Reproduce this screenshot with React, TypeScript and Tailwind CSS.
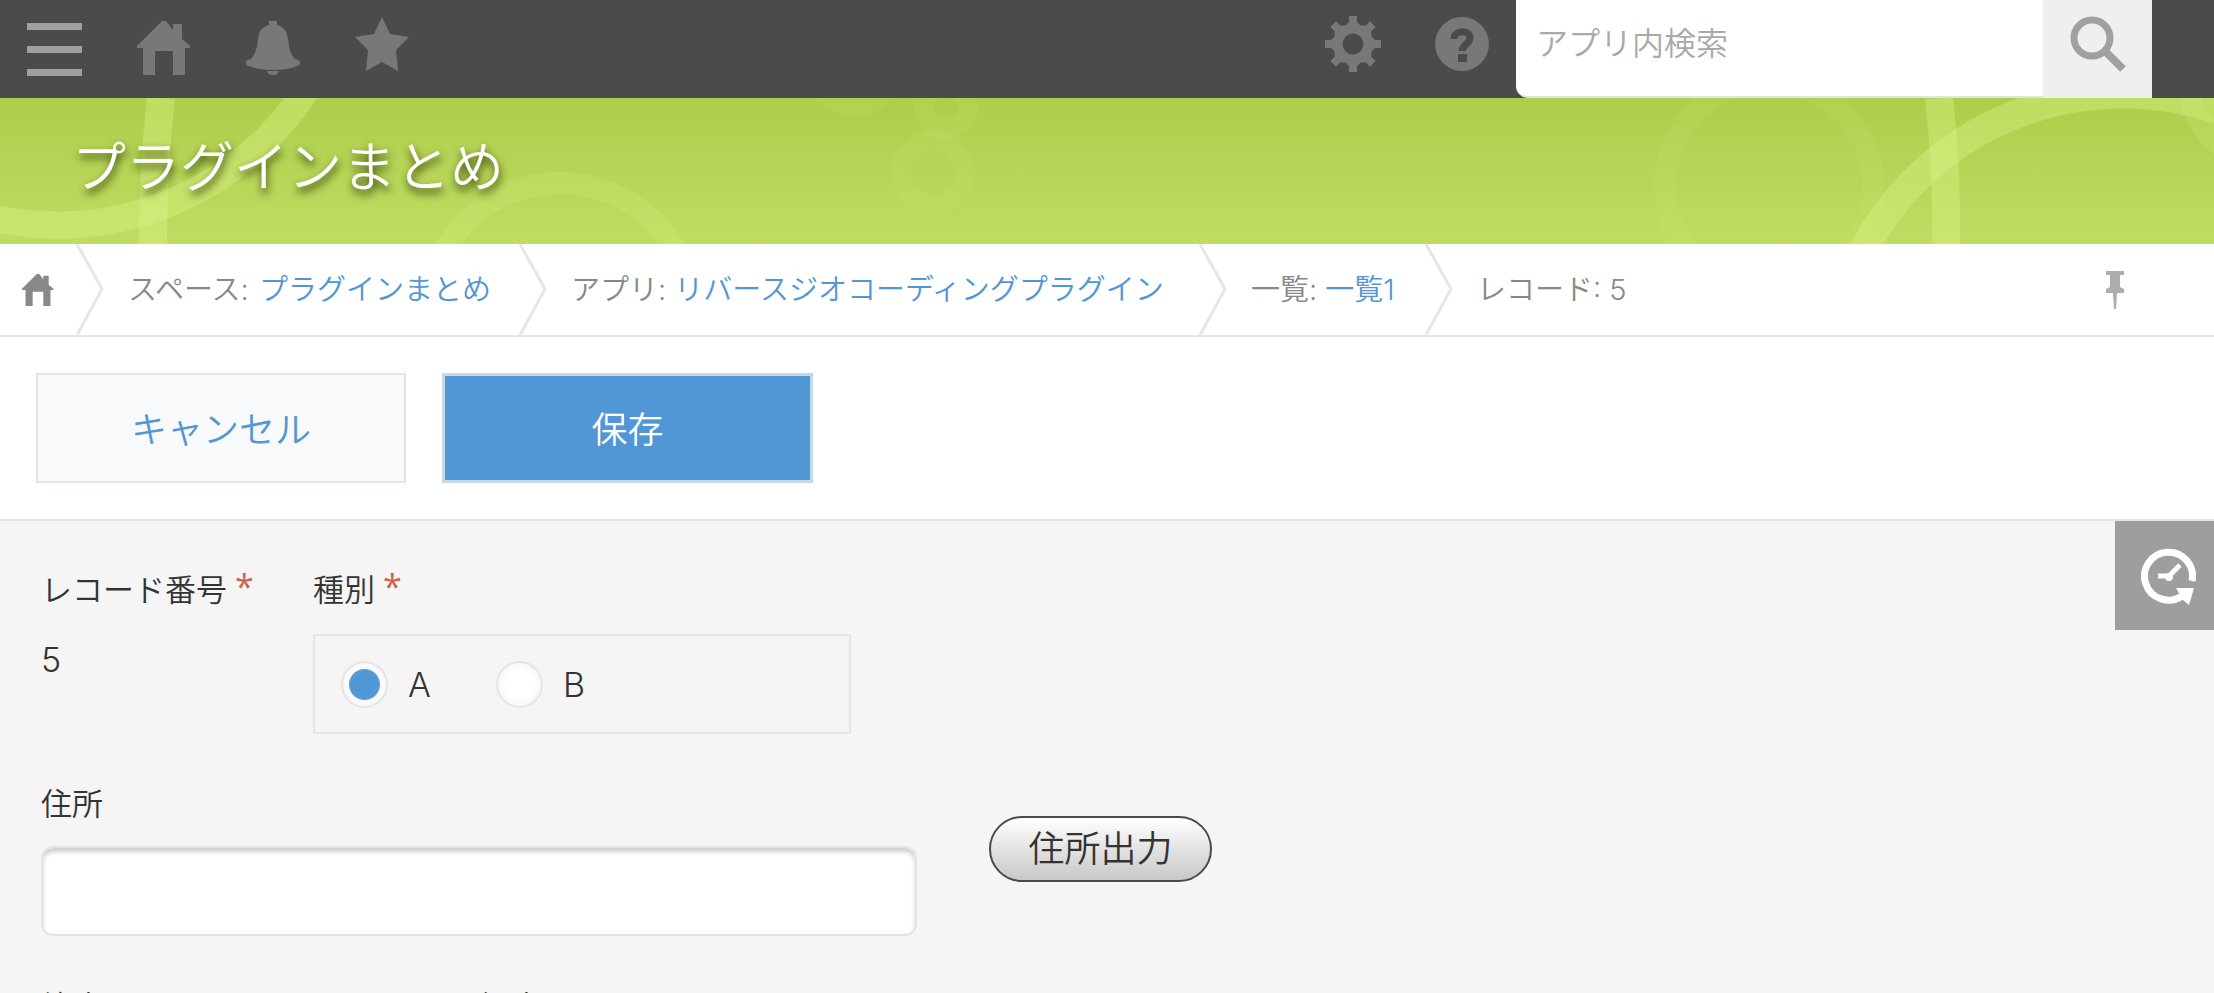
import React, { useState } from 'react'

const NAV_ICON = 'flex h-[98px] w-[109px] items-start justify-center text-[#787878]'
const TEXT_BOX = 'mt-[22px] block h-[90px] rounded-xl border-2 border-[#e3e5e5] bg-white px-4 text-[34px] shadow-[inset_0_4px_4px_#cccfcf] outline-none'

function HomeIcon({ className }: { className?: string }) {
  return (
    <svg viewBox="0 0 54 54" className={className} fill="currentColor" aria-hidden="true">
      <path d="M25 0h4l7 9V3h9v15l8 7v2h-5v27H36V30H18v24H6V27H0v-2z" />
    </svg>
  )
}

function BellIcon() {
  return (
    <svg viewBox="0 0 54 54" className="h-[54px] w-[54px]" fill="currentColor" aria-hidden="true">
      <path d="M23 0h8v4c7 2 10 6 11 14 1 10 3 16 7 20 2 1 5 1 5 3 0 3-1 4-3 4-7 3-15 4-24 4S10 48 3 45c-2 0-3-1-3-4 0-2 3-2 5-3 4-4 6-10 7-20 1-8 4-12 11-14zM21 50h12c-1 3-3 4-6 4s-5-1-6-4z" />
    </svg>
  )
}

function StarIcon() {
  return (
    <svg viewBox="0 0 54 54" className="h-[54px] w-[54px]" fill="currentColor" aria-hidden="true">
      <path d="M27 0l8 17 19 3-13 13 2 21-16-9-16 9 2-21L0 20l19-3z" />
    </svg>
  )
}

function GearIcon() {
  return (
    <svg viewBox="0 0 56 56" className="h-[56px] w-[56px]" aria-hidden="true">
      <g fill="currentColor">
        {[0, 45, 90, 135, 180, 225, 270, 315].map(a => (
          <path key={a} d="M24 0h8v6l5 5H19l5-5z" transform={`rotate(${a} 28 28)`} />
        ))}
      </g>
      <circle cx="28" cy="28" r="15" fill="none" stroke="currentColor" strokeWidth="9" />
    </svg>
  )
}

function HelpIcon() {
  return (
    <svg viewBox="0 0 54 54" className="h-[54px] w-[54px]" aria-hidden="true">
      <circle cx="27" cy="27" r="27" fill="currentColor" />
      <path d="M19 22c0-9 16-10 16-1 0 6-8 7-8 13" fill="none" stroke="#4b4b4b" strokeWidth="7" />
      <path d="M23 37h9v8h-9z" fill="#4b4b4b" />
    </svg>
  )
}

function SearchIcon() {
  return (
    <svg viewBox="0 0 56 56" className="h-[56px] w-[56px]" fill="none" stroke="#a0a0a0" aria-hidden="true">
      <circle cx="22" cy="22" r="18" strokeWidth="7" />
      <path d="M35 35l18 18" strokeWidth="8" />
    </svg>
  )
}

function PinIcon() {
  return (
    <svg viewBox="0 0 18 38" className="h-[38px] w-[18px]" fill="#adadad" aria-hidden="true">
      <path d="M0 0h18v4h-4v12l4 2v4h-7l-1 16H8L7 22H0v-4l4-2V4H0z" />
    </svg>
  )
}

function HistoryIcon() {
  return (
    <svg viewBox="0 0 56 58" className="h-[58px] w-[56px]" fill="none" stroke="#fff" aria-hidden="true">
      <path d="M51 34A24 24 0 1 0 41 49" strokeWidth="7" />
      <path d="M35 41h18l-5 17-6-5z" fill="#fff" stroke="none" />
      <path d="M39 18L28 29H17" strokeWidth="5" />
      <circle cx="28" cy="30" r="4" fill="#fff" stroke="none" />
    </svg>
  )
}

function Separator() {
  return (
    <svg viewBox="0 0 28 91" className="h-[91px] w-7 shrink-0" fill="none" stroke="#e5e6e8" strokeWidth="3" aria-hidden="true">
      <path d="M1 0l25 45L1 91" />
    </svg>
  )
}

// decorative rings behind the app title
function BannerArt() {
  return (
    <svg viewBox="0 0 2214 146" preserveAspectRatio="none" className="absolute inset-0 h-full w-full" fill="none" stroke="#dcf58a" aria-hidden="true">
      <g strokeOpacity=".38">
        <circle cx="57" cy="-171" r="298" strokeWidth="27" />
        <path d="M161 0Q153 70 153 146" strokeWidth="28" />
        <path d="M1939 0Q1947 70 1946 146" strokeWidth="28" />
        <circle cx="2123" cy="290" r="294" strokeWidth="29" />
      </g>
      <g strokeOpacity=".18">
        <circle cx="560" cy="218" r="133" strokeWidth="22" />
        <circle cx="2269" cy="-16" r="80" strokeWidth="22" />
      </g>
      <g strokeOpacity=".09">
        <circle cx="1769" cy="88" r="104" strokeWidth="22" />
        <circle cx="933" cy="75" r="32" strokeWidth="20" />
        <circle cx="946" cy="9" r="22" strokeWidth="21" />
        <circle cx="854" cy="-35" r="42" strokeWidth="22" />
      </g>
    </svg>
  )
}

function FieldLabel({ text, required, htmlFor }: { text: string; required?: boolean; htmlFor?: string }) {
  return (
    <label htmlFor={htmlFor} className="flex gap-2 whitespace-nowrap text-[31px] leading-10">
      {text}
      {required && <span className="font-['Open_Sans',sans-serif] text-[34px] font-normal leading-8 text-[#d0604f]">*</span>}
    </label>
  )
}

export default function App() {
  const [kind, setKind] = useState('A')

  return (
    <div className="flex h-screen flex-col overflow-hidden bg-[#f5f5f5] font-['Inter','Noto_Sans_CJK_JP',sans-serif] font-[350] text-[#333]">
      <header className="flex h-[98px] shrink-0 bg-[#4b4b4b]">
        <button aria-label="メニュー" className="flex h-[98px] w-[109px] flex-col items-center justify-center gap-4">
          <span className="h-[7px] w-[55px] bg-[#a0a0a0]" />
          <span className="h-[7px] w-[55px] bg-[#a0a0a0]" />
          <span className="h-[7px] w-[55px] bg-[#a0a0a0]" />
        </button>
        <button aria-label="ホーム" className={`${NAV_ICON} pt-[21px]`}><HomeIcon className="h-[54px] w-[54px]" /></button>
        <button aria-label="通知" className={`${NAV_ICON} pt-[21px]`}><BellIcon /></button>
        <button aria-label="お気に入り" className={`${NAV_ICON} pt-[17px]`}><StarIcon /></button>
        <div className="ml-auto flex pr-[62px]">
          <button aria-label="設定" className={`${NAV_ICON} pt-4`}><GearIcon /></button>
          <button aria-label="ヘルプ" className={`${NAV_ICON} pt-[17px]`}><HelpIcon /></button>
          <input type="search" aria-label="アプリ内検索" placeholder="アプリ内検索"
            className="w-[527px] rounded-bl-xl border-b-2 border-[#e3e3e3] bg-white pb-2 pl-5 text-[32px] outline-none placeholder:text-[#a9a9a9]" />
          <button aria-label="検索" className="flex w-[109px] justify-center bg-[#efefef] pt-4"><SearchIcon /></button>
        </div>
      </header>

      <div className="relative flex h-[146px] shrink-0 items-center bg-linear-to-b from-[#aecd4b] to-[#bfdd62] pb-2 pl-[72px]">
        <BannerArt />
        <h1 className="relative text-[54px] text-white [text-shadow:1px_5px_9px_rgba(40,50,0,0.95)]">プラグインまとめ</h1>
      </div>

      <nav className="flex h-[93px] shrink-0 items-center whitespace-nowrap border-b-2 border-[#e5e6e7] bg-white text-[29px] text-[#888]">
        <a href="#home" aria-label="ホーム" className="flex w-[76px] justify-center text-[#888]"><HomeIcon className="h-8 w-8" /></a>
        <Separator />
        <span className="w-[415px] pl-6">スペース: <a href="#space" className="pl-[2px] text-[#5196d5]">プラグインまとめ</a></span>
        <Separator />
        <span className="w-[652px] pl-6">アプリ: <a href="#app" className="text-[#5196d5]">リバースジオコーディングプラグイン</a></span>
        <Separator />
        <span className="w-[198px] pl-6">一覧: <a href="#view" className="text-[#5196d5]">一覧1</a></span>
        <Separator />
        <span className="pl-6">レコード: 5</span>
        <button aria-label="固定" className="ml-auto mr-[90px]"><PinIcon /></button>
      </nav>

      <div className="flex h-[184px] shrink-0 items-center gap-9 border-b-2 border-[#e3e5e7] bg-white pl-9 text-[36px]">
        <button className="h-[110px] w-[370px] border-2 border-[#e3e4e6] bg-[#f7f9fa] pt-1 text-[#5196d5]">キャンセル</button>
        <button className="h-[110px] w-[371px] border-3 border-[#c3d9ea] bg-[#5196d5] pt-1 text-white">保存</button>
      </div>

      <main className="flex items-start justify-between">
        <form className="flex flex-col pl-[41px] pt-[49px]" onSubmit={e => e.preventDefault()}>
          <div className="flex">
            <div className="w-[272px]">
              <FieldLabel text="レコード番号" required />
              <p className="pt-[30px] text-[34px] leading-10">5</p>
            </div>
            <fieldset>
              <legend><FieldLabel text="種別" required /></legend>
              <div className="mt-6 flex h-[100px] w-[538px] items-center gap-[65px] border-2 border-[#e5e6e7] pl-[26px] text-[34px]">
                {['A', 'B'].map(v => (
                  <label key={v} className="flex items-center gap-5">
                    <input type="radio" name="kind" value={v} checked={kind === v} onChange={() => setKind(v)}
                      className="h-[47px] w-[47px] appearance-none rounded-full border-2 border-[#e3e5e7] bg-white bg-clip-padding shadow-[inset_0_0_8px_#eeeeee] checked:bg-[radial-gradient(circle,#5196d5_15px,transparent_16px)]" />
                    {v}
                  </label>
                ))}
              </div>
            </fieldset>
          </div>

          <div className="mt-[50px] flex gap-[72px]">
            <div>
              <FieldLabel text="住所" htmlFor="address" />
              <input id="address" type="text" className={`${TEXT_BOX} w-[876px]`} />
            </div>
            <button className="mt-8 h-[66px] w-[223px] rounded-full border-2 border-[#4b4b4b] bg-linear-to-b from-white to-[#c8c8c8] text-[36px] leading-10">住所出力</button>
          </div>

          <div className="mt-[51px] flex gap-[42px]">
            <div>
              <FieldLabel text="緯度" htmlFor="lat" />
              <input id="lat" type="text" className={`${TEXT_BOX} w-[396px]`} />
            </div>
            <div>
              <FieldLabel text="経度" htmlFor="lng" />
              <input id="lng" type="text" className={`${TEXT_BOX} w-[396px]`} />
            </div>
          </div>
        </form>
        <button aria-label="変更履歴" className="flex h-[109px] w-[99px] items-center justify-center bg-[#9e9e9e] pl-2">
          <HistoryIcon />
        </button>
      </main>
    </div>
  )
}
